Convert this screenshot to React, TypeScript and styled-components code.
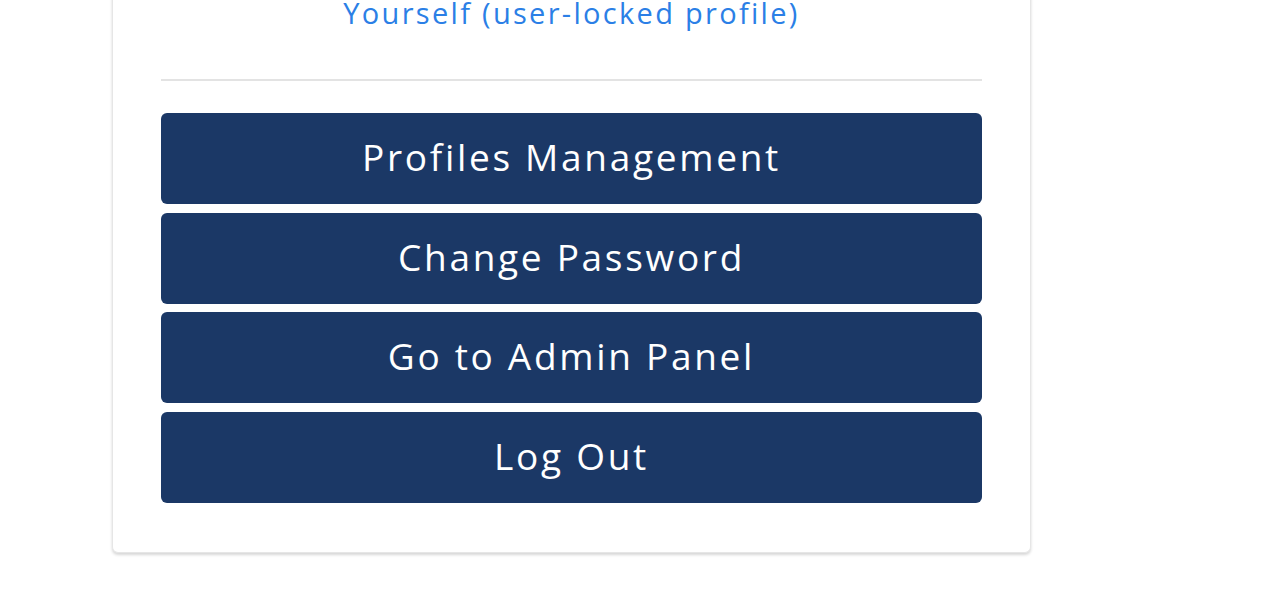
import React from "react";
import styled, { createGlobalStyle } from "styled-components";

const Global = createGlobalStyle`
  html, body { margin: 0; padding: 0; background: #ffffff; }
  body { font-family: "Open Sans", "Liberation Sans", sans-serif; }
`;

const Page = styled.div`
  width: 1280px;
  height: 595px;
  overflow: hidden;
  background: #ffffff;
`;

const Card = styled.div`
  box-sizing: border-box;
  width: 919px;
  margin: -18px 0 0 112px;
  padding: 13px 48px 49px;
  background: #ffffff;
  border: 1px solid #e6e6e6;
  border-top: none;
  border-radius: 0 0 6px 6px;
  box-shadow: 0 2px 3px rgba(0, 0, 0, 0.16);
`;

const ProfileLink = styled.a`
  display: block;
  text-align: center;
  color: #2b7fe6;
  font-size: 29px;
  line-height: 36px;
  letter-spacing: 2.3px;
  font-weight: 400;
  text-decoration: none;
`;

const Divider = styled.hr`
  margin: 48px 0 32px;
  border: none;
  border-top: 2px solid #e3e3e3;
`;

const ButtonList = styled.div`
  display: flex;
  flex-direction: column;
  gap: 8.7px;
`;

const ActionButton = styled.button`
  height: 91px;
  width: 100%;
  padding: 0 0 4px;
  border: none;
  border-radius: 6px;
  background: #1b3866;
  color: #ffffff;
  font-family: "Open Sans", "Liberation Sans", sans-serif;
  font-size: 37px;
  letter-spacing: 2.7px;
  font-weight: 500;
  cursor: pointer;
`;

const actions = [
  "Profiles Management",
  "Change Password",
  "Go to Admin Panel",
  "Log Out",
];

export default function App() {
  return (
    <Page>
      <Global />
      <Card>
        <ProfileLink href="#">Yourself (user-locked profile)</ProfileLink>
        <Divider />
        <ButtonList>
          {actions.map((a) => (
            <ActionButton key={a}>{a}</ActionButton>
          ))}
        </ButtonList>
      </Card>
    </Page>
  );
}
